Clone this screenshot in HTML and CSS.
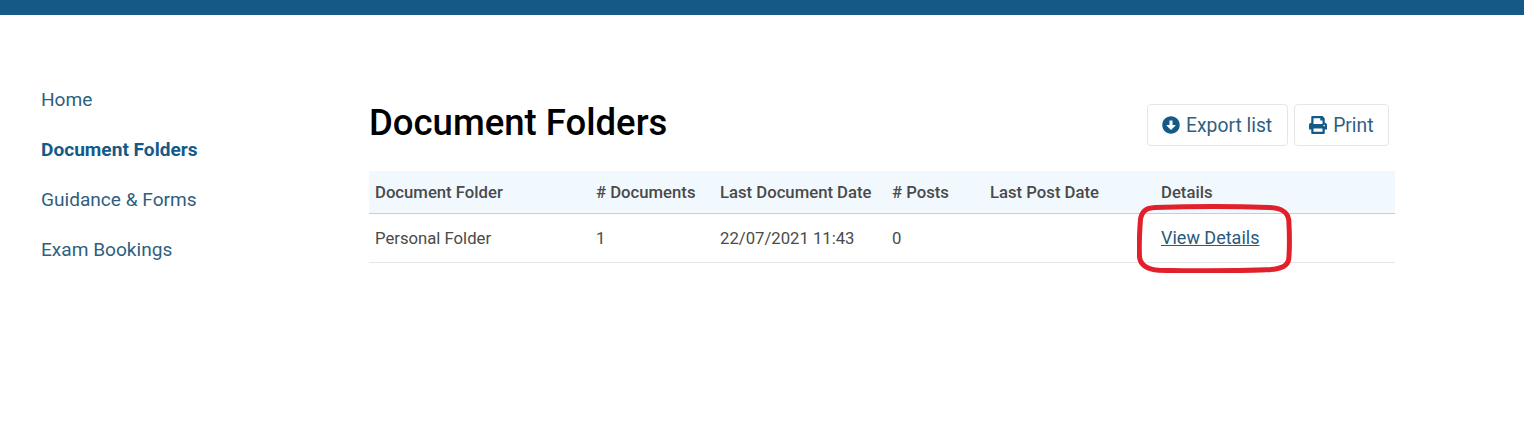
FILE: index.html
```html
<!DOCTYPE html>
<html lang="en">
<head>
<meta charset="utf-8">
<title>Document Folders</title>
<link rel="stylesheet" href="styles.css">
</head>
<body>
<header class="topbar"></header>
<div class="layout">
  <nav class="sidenav">
    <a href="#">Home</a>
    <a href="#" class="active">Document Folders</a>
    <a href="#">Guidance &amp; Forms</a>
    <a href="#">Exam Bookings</a>
  </nav>
  <main class="content">
    <div class="head">
      <h1>Document Folders</h1>
      <div class="actions">
        <a href="#" class="btn">
          <svg class="ico" viewBox="0 0 512 512"><path fill="#155a87" d="M504 256c0 137-111 248-248 248S8 393 8 256 119 8 256 8s248 111 248 248zM212 140v116h-70.900c-10.700 0-16.100 13-8.500 20.500l114.900 114.300c4.700 4.700 12.200 4.700 16.900 0l114.900-114.300c7.600-7.600 2.200-20.500-8.500-20.500H300V140c0-6.600-5.400-12-12-12h-64c-6.600 0-12 5.400-12 12z"/></svg>
          Export list
        </a>
        <a href="#" class="btn">
          <svg class="ico" viewBox="0 0 512 512"><path fill="#155a87" d="M448 192V77.250c0-8.490-3.370-16.620-9.370-22.630L393.370 9.370c-6-6-14.140-9.370-22.630-9.370H96C78.330 0 64 14.330 64 32v160c-35.350 0-64 28.650-64 64v112c0 8.840 7.160 16 16 16h48v96c0 17.670 14.330 32 32 32h320c17.670 0 32-14.330 32-32v-96h48c8.840 0 16-7.160 16-16V256c0-35.350-28.650-64-64-64zm-64 256H128v-96h256v96zm0-224H128V64h192v48c0 8.840 7.160 16 16 16h48v96zm48 72c-13.250 0-24-10.750-24-24 0-13.260 10.750-24 24-24s24 10.740 24 24c0 13.250-10.750 24-24 24z"/></svg>
          Print
        </a>
      </div>
    </div>
    <div class="table-wrap">
      <table>
        <colgroup>
          <col class="c1"><col class="c2"><col class="c3"><col class="c4"><col class="c5"><col class="c6">
        </colgroup>
        <thead>
          <tr><th>Document Folder</th><th># Documents</th><th>Last Document Date</th><th># Posts</th><th>Last Post Date</th><th>Details</th></tr>
        </thead>
        <tbody>
          <tr><td>Personal Folder</td><td>1</td><td>22/07/2021 11:43</td><td>0</td><td></td><td class="link-cell"><a href="#" class="detail">View Details</a></td></tr>
        </tbody>
      </table>
      <svg class="annotation" viewBox="0 0 155 69" aria-hidden="true"><path d="M18 3.500C55 2.300 100 2.300 132 3.500C145 4 150.500 8 151.800 16C152.600 30 152.600 44 151.800 55C150.500 62 145 65 130 65.800C95 67 55 67 22 66.200C9 65.500 3.500 61 2.500 53C2 42 2.500 28 3.500 15C5 7 9 4 18 3.500Z" fill="none" stroke="#e2202c" stroke-width="5"/></svg>
    </div>
  </main>
</div>
</body>
</html>
```
FILE: styles.css
```css
* { box-sizing: border-box; }
html, body { margin: 0; padding: 0; background: #fff; }
body { font-family: Roboto, "Liberation Sans", sans-serif; color: #444; height: 444px; overflow: hidden; }
.topbar { height: 15px; background: #155a87; }
.layout { display: flex; padding-top: 60px; }
.sidenav { width: 369px; padding-left: 41px; display: flex; flex-direction: column; }
.sidenav a { height: 50px; line-height: 50px; font-size: 19.1px; color: #2f5f80; text-decoration: none; }
.sidenav a.active { font-weight: 700; color: #155a87; }
.content { width: 1026px; }
.head { display: flex; justify-content: space-between; align-items: flex-start; height: 96px; padding-top: 29px; padding-right: 6px; }
h1 { margin: 0; font-size: 36.5px; font-weight: 500; line-height: 36px; color: #000; margin-top: 1px; }
.actions { display: flex; gap: 6px; }
.btn { display: flex; align-items: center; height: 42px; padding: 0 14.5px; border: 1px solid #e4e6e8; border-radius: 4px; color: #2f5f80; font-size: 19.3px; text-decoration: none; gap: 6px; }
.ico { width: 18px; height: 18px; display: block; }
.table-wrap { position: relative; }
table { width: 1026px; border-collapse: collapse; table-layout: fixed; font-size: 16.7px; }
.c1 { width: 221px; } .c2 { width: 124px; } .c3 { width: 172px; } .c4 { width: 98px; } .c5 { width: 171px; } .c6 { width: 240px; }
th { height: 42px; background: #f2f9fe; text-align: left; padding: 1px 6px 0; font-weight: 500; color: #4a4a4a; border-bottom: 1px solid #c8ccd4; white-space: nowrap; }
td { height: 49px; padding: 1px 6px 0; color: #4a4a4a; border-bottom: 1px solid #e4e6e8; white-space: nowrap; }
td.link-cell { padding-top: 0; }
.detail { color: #2a5a7c; text-decoration: underline; font-size: 18px; }
.annotation { position: absolute; left: 768px; top: 33px; width: 155px; height: 69px; }
```
